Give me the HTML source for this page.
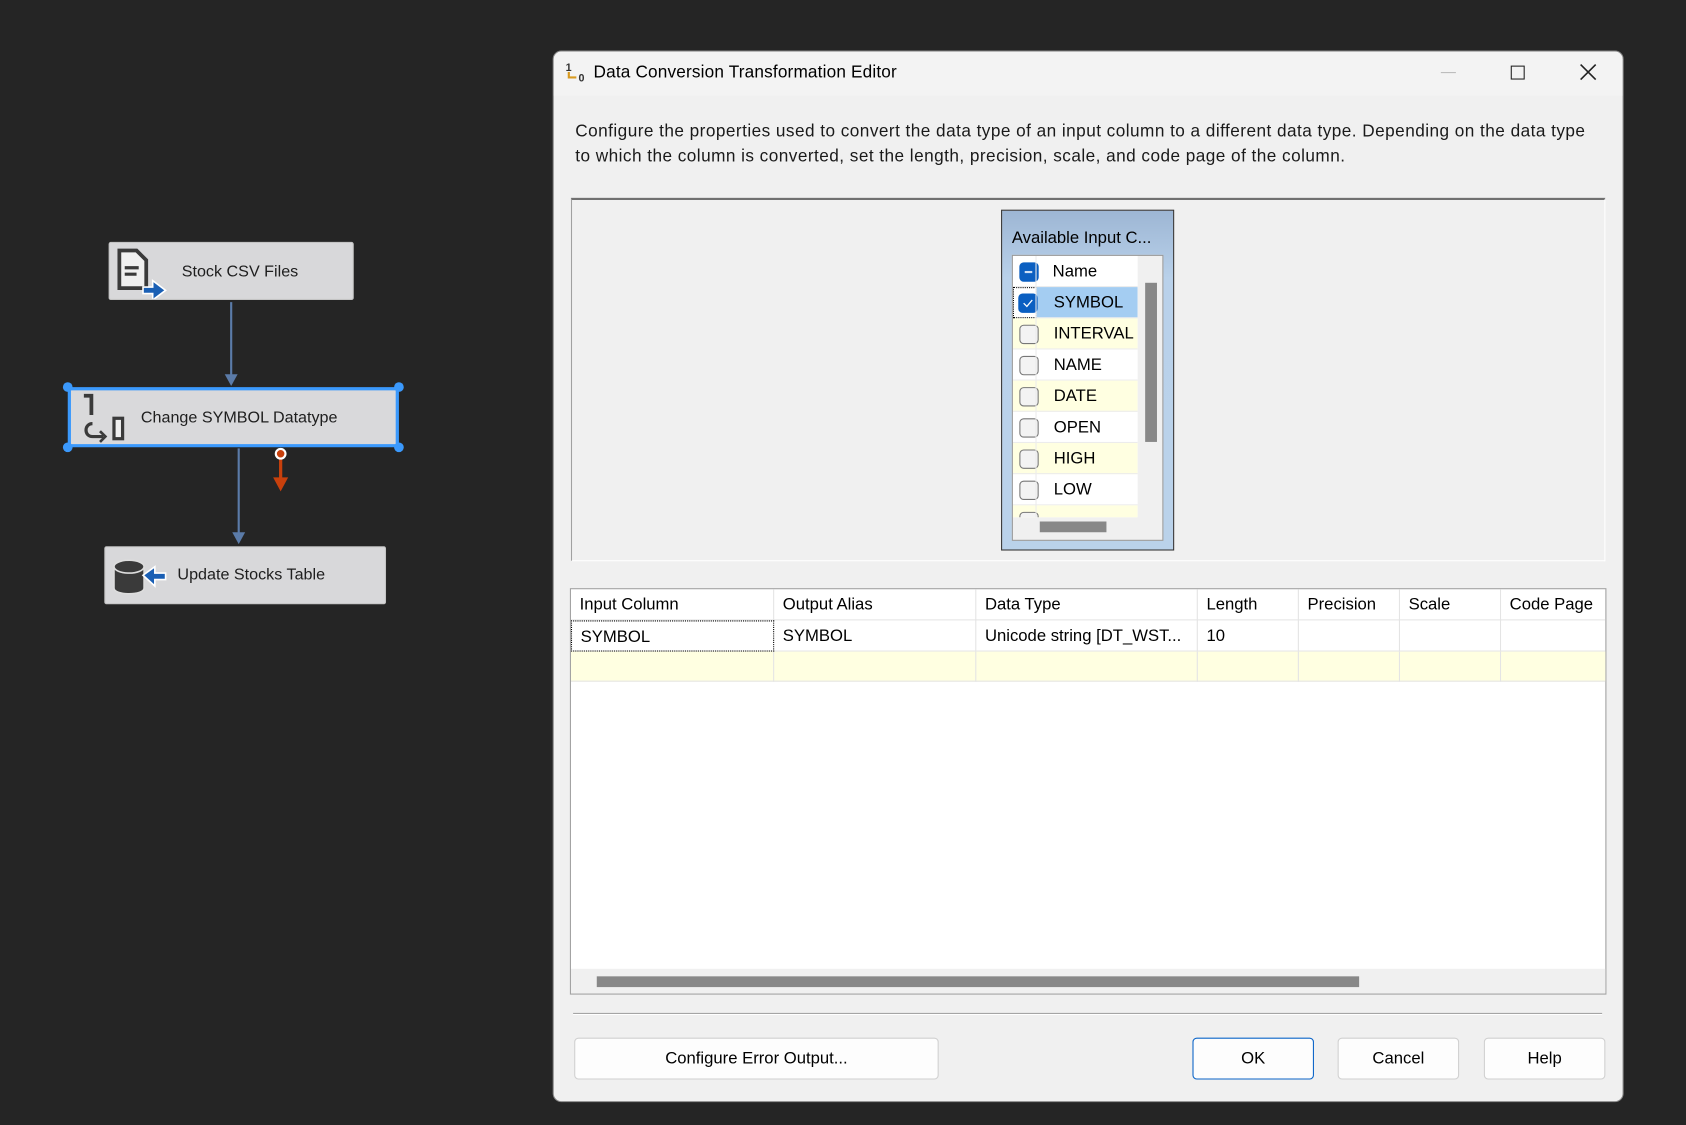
<!DOCTYPE html>
<html><head><meta charset="utf-8"><style>
*{box-sizing:border-box;margin:0;padding:0}
html,body{width:1686px;height:1125px;overflow:hidden;background:#252525;font-family:"Liberation Sans",sans-serif}
#w{position:absolute;left:0;top:0;width:1568px;height:1046px;transform:scale(1.07526);transform-origin:0 0}
.a{position:absolute}
.node{position:absolute;background:#d8d8da;border-radius:2px;color:#1e1e1e;font-size:15px;border:1px solid #c4c4c4}
.t{position:absolute;white-space:nowrap;color:#000;font-size:15.5px}
.hd{position:absolute;top:0;height:29px;line-height:29px;padding-left:8px;border-right:1px solid #e4e4e4;font-size:15.5px;white-space:nowrap}
.btn{position:absolute;top:965px;height:39px;background:#fdfdfd;border:1px solid #d0d0d0;border-radius:4px;text-align:center;line-height:37px;font-size:15.5px}
.row{position:absolute;left:0;width:116px;height:29px;border-bottom:1px solid #ececec}
.cb{position:absolute;left:6px;top:6px;width:18px;height:18px;border:1.5px solid #777;border-radius:4px;background:#f3f3f3}
.rl{position:absolute;left:38px;top:0;line-height:29px;font-size:15.5px}
</style></head><body><div id="w">
<svg class="a" style="left:0;top:0" width="520" height="600">
<line x1="215" y1="281" x2="215" y2="350" stroke="#5b7ba8" stroke-width="2"/>
<polygon points="209,348 221,348 215,359" fill="#5b7ba8"/>
<line x1="222" y1="417" x2="222" y2="497" stroke="#5b7ba8" stroke-width="2"/>
<polygon points="216,495 228,495 222,506" fill="#5b7ba8"/>
<line x1="261" y1="426" x2="261" y2="446" stroke="#c8400c" stroke-width="3"/>
<polygon points="254,444 268,444 261,457" fill="#c8400c"/>
<circle cx="261" cy="422" r="4.5" fill="#c8400c" stroke="#fff" stroke-width="2"/>
</svg>
<div class="node" style="left:101px;top:225px;width:228px;height:54px"><span class="a" style="left:67px;top:18px">Stock CSV Files</span>
<svg class="a" style="left:5px;top:4px" width="50" height="48"><path d="M4 3h16l9 9v26H4z" fill="#f0f0f0" stroke="#3a3a3a" stroke-width="3.5"/><path d="M9 19h13M9 25h11" stroke="#3a3a3a" stroke-width="3"/><path d="M26 37h9v-6l12 9-12 9v-6h-9z" fill="#1a5fb4" stroke="#fff" stroke-width="1.5"/></svg></div>
<div class="node" style="left:63px;top:360px;width:308px;height:56px;border:3px solid #3b99fc;background:#d9d9db"><span class="a" style="left:65px;top:17px">Change SYMBOL Datatype</span>
<svg class="a" style="left:8px;top:2px" width="50" height="48"><path d="M4 3h7v18" stroke="#3a3a3a" stroke-width="3.5" fill="none"/><path d="M12 29c-8 0-8 12 0 12h10" stroke="#3a3a3a" stroke-width="3" fill="none"/><path d="M19 36l5 5-5 5" stroke="#3a3a3a" stroke-width="2.5" fill="none"/><rect x="32" y="24" width="8" height="19" fill="#f0f0f0" stroke="#3a3a3a" stroke-width="3"/></svg></div>
<svg class="a" style="left:55px;top:352px" width="330" height="72"><g fill="#3b99fc"><circle cx="8" cy="8" r="4.5"/><circle cx="316" cy="8" r="4.5"/><circle cx="8" cy="64" r="4.5"/><circle cx="316" cy="64" r="4.5"/></g></svg>
<div class="node" style="left:97px;top:508px;width:262px;height:54px"><span class="a" style="left:67px;top:17px">Update Stocks Table</span>
<svg class="a" style="left:5px;top:6px" width="54" height="44"><path d="M3 12v20c0 7 28 7 28 0V12" fill="#3a3a3a" stroke="#ddd" stroke-width="1.5"/><ellipse cx="17" cy="12" rx="14" ry="6" fill="#3a3a3a" stroke="#ddd" stroke-width="1.5"/><path d="M30 20l11-8v6h10v6H41v6z" fill="#1a5fb4" stroke="#fff" stroke-width="1.5"/></svg></div>
<div class="a" style="left:514px;top:47px;width:996px;height:978px;background:#f0f0f0;border:1px solid #888;border-radius:8px;overflow:hidden">
<div class="a" style="left:0;top:0;width:996px;height:41px;background:#f3f3f3"></div>
</div>
<svg class="a" style="left:525px;top:56px" width="24" height="22"><text x="1" y="10" font-size="10" font-family="Liberation Sans" font-weight="bold" fill="#333">1</text><path d="M4 11v5h7" stroke="#d89a20" stroke-width="2" fill="none"/><text x="13" y="20" font-size="10" font-family="Liberation Sans" font-weight="bold" fill="#333">0</text></svg>
<div class="t" style="left:552px;top:59px;font-size:16px;letter-spacing:0.15px">Data Conversion Transformation Editor</div>
<div class="a" style="left:1340px;top:67px;width:14px;height:1px;background:#bbb"></div>
<div class="a" style="left:1405px;top:61px;width:13px;height:13px;border:1.5px solid #222"></div>
<svg class="a" style="left:1469px;top:59px" width="16" height="16"><path d="M1 1l14 14M15 1L1 15" stroke="#222" stroke-width="1.5"/></svg>
<div class="t" style="left:535px;top:111px;line-height:23px;font-size:16px;letter-spacing:0.42px;color:#1a1a1a">Configure the properties used to convert the data type of an input column to a different data type. Depending on the data type<br>to which the column is converted, set the length, precision, scale, and code page of the column.</div>
<div class="a" style="left:531px;top:184px;width:962px;height:338px;border-top:2px solid #707070;border-left:1px solid #a0a0a0;border-right:1px solid #fff;border-bottom:1px solid #fff;background:#f0f0f0"></div>
<div class="a" style="left:931px;top:195px;width:161px;height:317px;border:1px solid #333;background:linear-gradient(#9db6d4,#b9d1ea 20%,#bad2ea)">
<div class="t" style="left:9px;top:17px;font-size:15.5px">Available Input C...</div>
<div class="a" style="left:9px;top:41px;width:141px;height:266px;border:1px solid #999;background:#f0f0f0;overflow:hidden">
<div class="a" style="left:0;top:0;width:116px;height:243px;background:#fff;overflow:hidden">
<div class="row" style="top:0"><div class="cb" style="background:#0b5fc1;border-color:#0b5fc1"><div class="a" style="left:4px;top:7px;width:7px;height:1.5px;background:#cfe0f5"></div></div><span class="rl" style="left:37px">Name</span></div>
<div class="row" style="top:29px;background:#a4cdf2;left:22px;width:94px"></div>
<div class="row" style="top:29px;width:22px;background:#fff;outline:1px dotted #000;outline-offset:-1px"><div class="cb" style="left:5px;background:#0b5fc1;border-color:#0b5fc1"><svg class="a" style="left:2px;top:2px" width="12" height="12"><path d="M2 6l3 3 5-6" stroke="#fff" stroke-width="1.2" fill="none"/></svg></div></div>
<span class="rl" style="top:29px">SYMBOL</span>
<div class="row" style="top:58px;background:#ffffe1"><div class="cb"></div><span class="rl">INTERVAL</span></div>
<div class="row" style="top:87px"><div class="cb"></div><span class="rl">NAME</span></div>
<div class="row" style="top:116px;background:#ffffe1"><div class="cb"></div><span class="rl">DATE</span></div>
<div class="row" style="top:145px"><div class="cb"></div><span class="rl">OPEN</span></div>
<div class="row" style="top:174px;background:#ffffe1"><div class="cb"></div><span class="rl">HIGH</span></div>
<div class="row" style="top:203px"><div class="cb"></div><span class="rl">LOW</span></div>
<div class="row" style="top:232px;background:#ffffe1"><div class="cb"></div></div>
<div class="a" style="left:21px;top:0;width:1px;height:243px;background:#ececec"></div>
</div>
<div class="a" style="left:123px;top:25px;width:11px;height:148px;background:#888"></div>
<div class="a" style="left:25px;top:247px;width:62px;height:10px;background:#888"></div>
</div></div>
<div class="a" style="left:530px;top:547px;width:964px;height:378px;border:1px solid #a0a0a0;background:#fff;overflow:hidden">
<div class="a" style="left:0;top:0;width:964px;height:29px;border-bottom:1px solid #e4e4e4">
<div class="hd" style="left:0;width:189px">Input Column</div><div class="hd" style="left:189px;width:188px">Output Alias</div><div class="hd" style="left:377px;width:206px">Data Type</div><div class="hd" style="left:583px;width:94px">Length</div><div class="hd" style="left:677px;width:94px">Precision</div><div class="hd" style="left:771px;width:94px">Scale</div><div class="hd" style="left:865px;width:99px;border:0">Code Page</div></div>
<div class="a" style="left:0;top:29px;width:964px;height:29px;border-bottom:1px solid #e4e4e4">
<div class="hd" style="left:0;width:189px;border:1px dotted #000">SYMBOL</div><div class="hd" style="left:189px;width:188px">SYMBOL</div><div class="hd" style="left:377px;width:206px">Unicode string [DT_WST...</div><div class="hd" style="left:583px;width:94px">10</div><div class="hd" style="left:677px;width:94px"></div><div class="hd" style="left:771px;width:94px"></div></div>
<div class="a" style="left:0;top:58px;width:964px;height:28px;background:#ffffe1;border-bottom:1px solid #e4e4e4">
<div class="hd" style="left:0;width:189px;height:28px"></div><div class="hd" style="left:189px;width:188px;height:28px"></div><div class="hd" style="left:377px;width:206px;height:28px"></div><div class="hd" style="left:583px;width:94px;height:28px"></div><div class="hd" style="left:677px;width:94px;height:28px"></div><div class="hd" style="left:771px;width:94px;height:28px"></div></div>
<div class="a" style="left:0;top:353px;width:964px;height:25px;background:#f0f0f0"></div>
<div class="a" style="left:24px;top:360px;width:709px;height:10px;background:#888"></div>
</div>
<div class="a" style="left:533px;top:942px;width:957px;height:1px;background:#a0a0a0"></div>
<div class="a" style="left:533px;top:943px;width:957px;height:1px;background:#fff"></div>
<div class="btn" style="left:534px;width:339px">Configure Error Output...</div>
<div class="btn" style="left:1109px;width:113px;border:1.5px solid #0a64c8">OK</div>
<div class="btn" style="left:1244px;width:113px">Cancel</div>
<div class="btn" style="left:1380px;width:113px">Help</div>
</div></body></html>
